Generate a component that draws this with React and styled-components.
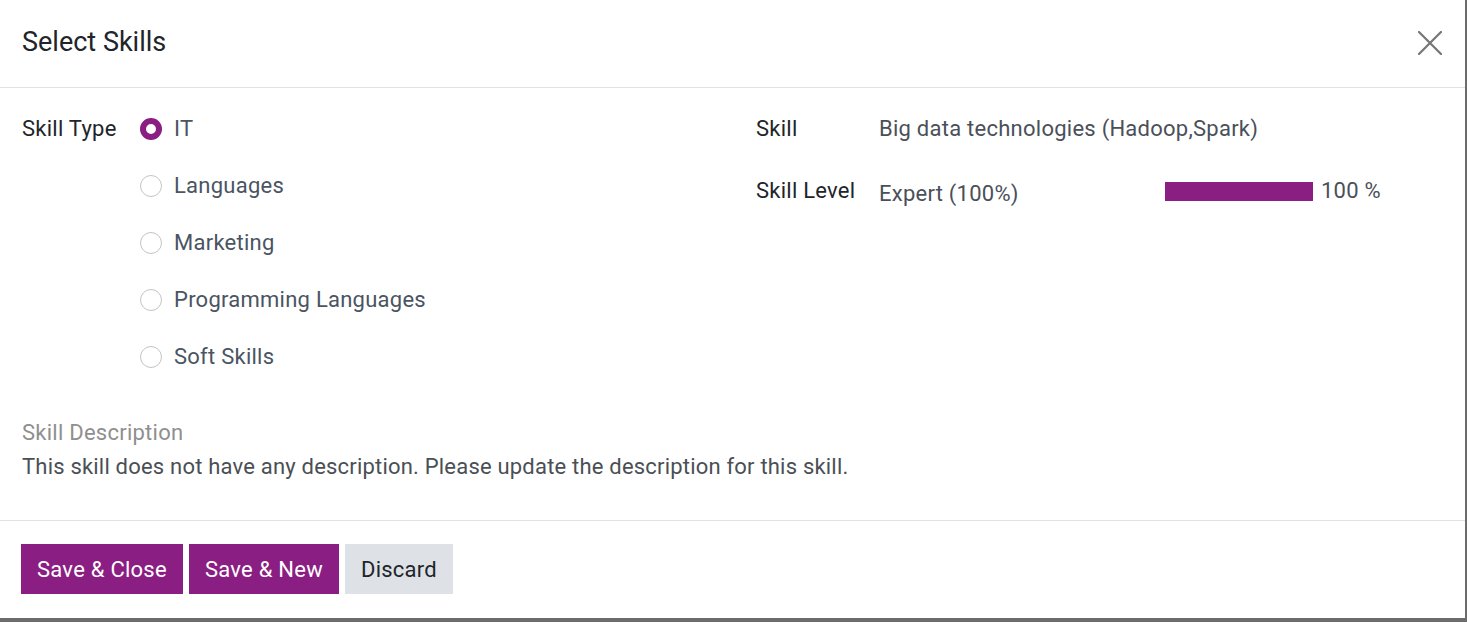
import React from "react";
import styled, { createGlobalStyle } from "styled-components";

const GlobalStyle = createGlobalStyle`
  html, body {
    margin: 0;
    padding: 0;
    background: #6c6c6c;
    font-family: Roboto, "Noto Sans", sans-serif;
  }
`;

const purple = "#8a1e83";

const Dialog = styled.div`
  width: 1465px;
  height: 618px;
  background: #fff;
  display: flex;
  flex-direction: column;
  box-sizing: border-box;
`;

const Header = styled.div`
  height: 87px;
  border-bottom: 1px solid #dee2e6;
  display: flex;
  align-items: center;
  justify-content: space-between;
  padding: 0 23px 0 22px;
  flex-shrink: 0;
`;

const Title = styled.h4`
  margin: 0;
  font-size: 27px;
  font-weight: 400;
  color: #212529;
  padding-bottom: 4px;
`;

const CloseButton = styled.button`
  border: none;
  background: none;
  padding: 0;
  cursor: pointer;
  display: flex;
  margin-bottom: 2px;
`;

const Body = styled.div`
  flex: 1;
  padding: 29px 22px 0;
  border-bottom: 1px solid #dee2e6;
`;

const Columns = styled.div`
  display: grid;
  grid-template-columns: 734px 1fr;
`;

const FieldRow = styled.div`
  display: flex;
  align-items: flex-start;
  margin-bottom: ${(p) => p.$gap || 0}px;
`;

const Label = styled.div`
  width: ${(p) => p.$width}px;
  flex-shrink: 0;
  font-size: 22px;
  letter-spacing: 0.25px;
  color: #212529;
  line-height: 24px;
`;

const RadioList = styled.div`
  display: flex;
  flex-direction: column;
  gap: 33px;
`;

const RadioItem = styled.label`
  display: flex;
  align-items: center;
  gap: 12px;
  font-size: 22px;
  letter-spacing: 0.25px;
  line-height: 24px;
  color: #4a5462;
`;

const RadioCircle = styled.span`
  width: 22px;
  height: 22px;
  border-radius: 50%;
  box-sizing: border-box;
  border: ${(p) => (p.$checked ? `6px solid ${purple}` : "1px solid #c4c4c4")};
  background: #fff;
  flex-shrink: 0;
`;

const Value = styled.div`
  font-size: 22px;
  letter-spacing: 0.25px;
  line-height: 24px;
  color: #4a5059;
  width: ${(p) => (p.$width ? `${p.$width}px` : "auto")};
  padding-top: ${(p) => p.$offset || 0}px;
`;

const ProgressWrap = styled.div`
  display: flex;
  align-items: center;
  gap: 8px;
  font-size: 22px;
  letter-spacing: 0.25px;
  line-height: 24px;
  color: #4a5059;
`;

const ProgressBar = styled.div`
  width: 148px;
  height: 19px;
  background: #e9ecef;
  overflow: hidden;
`;

const ProgressFill = styled.div`
  height: 100%;
  background: ${purple};
`;

const DescLabel = styled.div`
  margin-top: 52px;
  font-size: 22px;
  letter-spacing: 0.25px;
  line-height: 24px;
  color: #8f8f8f;
`;

const DescText = styled.div`
  margin-top: 10px;
  font-size: 22px;
  letter-spacing: 0.2px;
  line-height: 24px;
  color: #4a4f55;
`;

const Footer = styled.div`
  height: 97px;
  display: flex;
  align-items: flex-start;
  gap: 6px;
  padding: 23px 21px 0;
  box-sizing: border-box;
  flex-shrink: 0;
`;

const Button = styled.button`
  height: 50px;
  padding: 0 16px;
  border: none;
  border-radius: 0;
  font-family: Roboto, sans-serif;
  font-size: 22px;
  letter-spacing: 0.25px;
  background: ${(p) => (p.$primary ? purple : "#dee2e6")};
  color: ${(p) => (p.$primary ? "#fff" : "#212529")};
  cursor: pointer;
`;

const types = ["IT", "Languages", "Marketing", "Programming Languages", "Soft Skills"];

export default function App() {
  const level = 100;
  return (
    <>
      <GlobalStyle />
      <Dialog>
        <Header>
          <Title>Select Skills</Title>
          <CloseButton aria-label="Close">
            <svg width="24" height="24" viewBox="0 0 24 24">
              <path d="M1 1 L23 23 M23 1 L1 23" stroke="#757575" strokeWidth="2.2" strokeLinecap="round" />
            </svg>
          </CloseButton>
        </Header>
        <Body>
          <Columns>
            <FieldRow>
              <Label $width={118}>Skill Type</Label>
              <RadioList>
                {types.map((t, i) => (
                  <RadioItem key={t}>
                    <RadioCircle $checked={i === 0} />
                    {t}
                  </RadioItem>
                ))}
              </RadioList>
            </FieldRow>
            <div>
              <FieldRow $gap={38}>
                <Label $width={123}>Skill</Label>
                <Value>Big data technologies (Hadoop,Spark)</Value>
              </FieldRow>
              <FieldRow>
                <Label $width={123}>Skill Level</Label>
                <Value $width={286} $offset={3}>Expert (100%)</Value>
                <ProgressWrap>
                  <ProgressBar>
                    <ProgressFill style={{ width: `${level}%` }} />
                  </ProgressBar>
                  {level} %
                </ProgressWrap>
              </FieldRow>
            </div>
          </Columns>
          <DescLabel>Skill Description</DescLabel>
          <DescText>
            This skill does not have any description. Please update the description for this skill.
          </DescText>
        </Body>
        <Footer>
          <Button $primary>Save &amp; Close</Button>
          <Button $primary>Save &amp; New</Button>
          <Button>Discard</Button>
        </Footer>
      </Dialog>
    </>
  );
}
